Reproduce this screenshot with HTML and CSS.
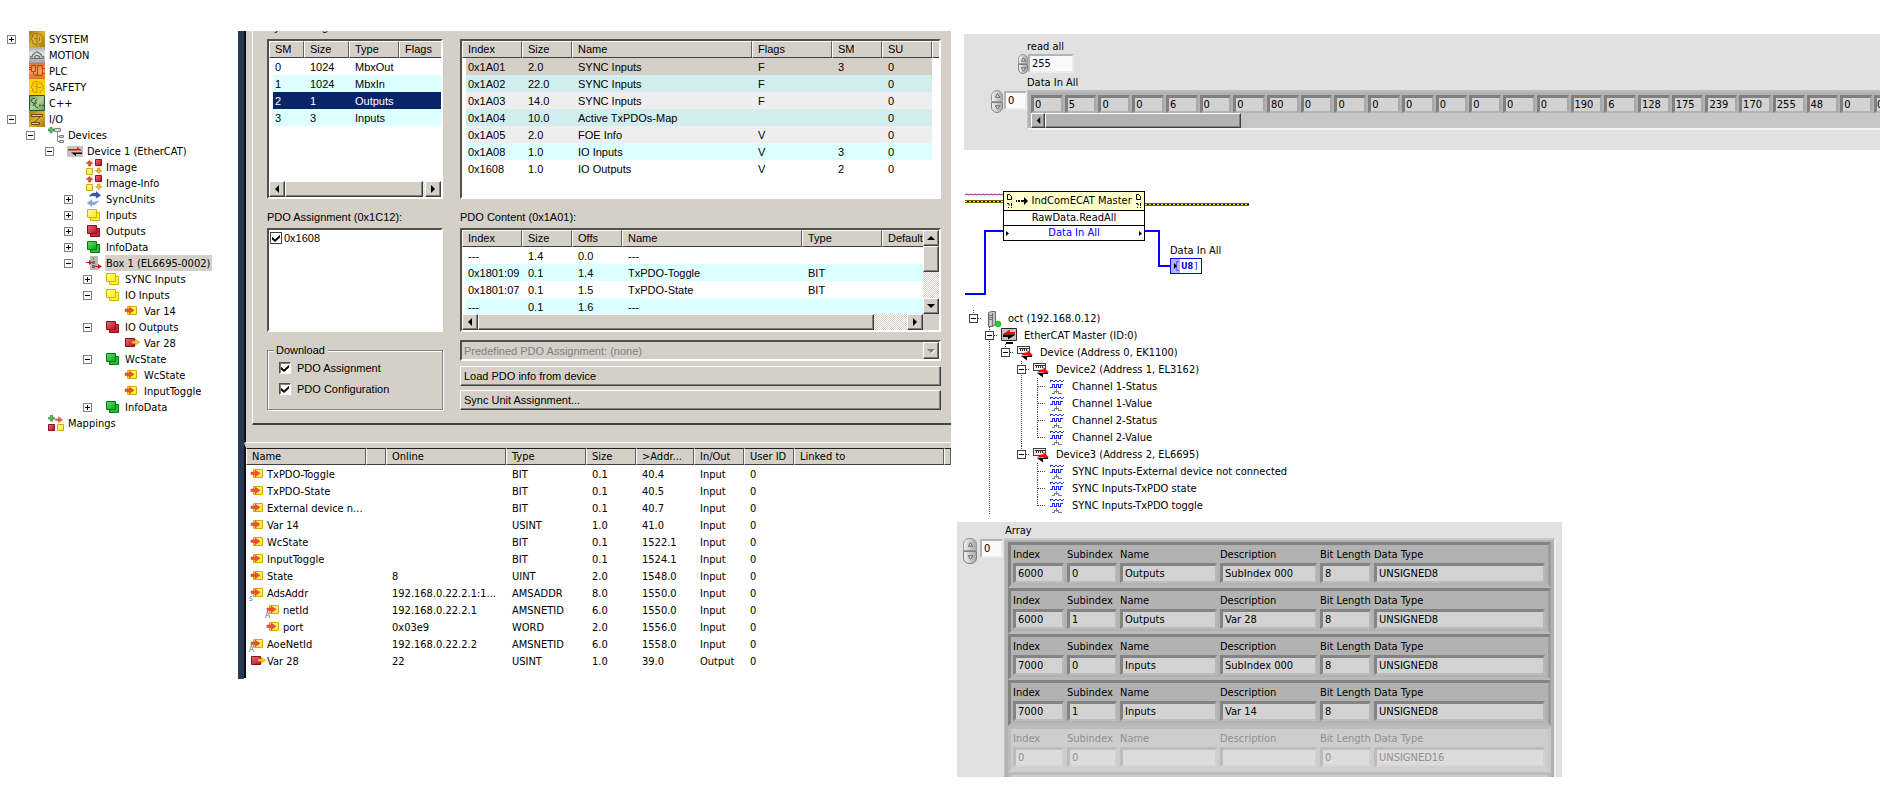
FILE: index.html
```html
<!DOCTYPE html>
<html lang="en">
  <head>
    <meta charset="UTF-8">
    <meta name="viewport" content="width=device-width, initial-scale=1.0">
    <title>EtherCAT IO Mapping</title>
    <link rel="stylesheet" href="styles.css">
  </head>
  <body>
    <!-- icon sprite -->
    <svg class="sprite" aria-hidden="true">
      <defs>
        <linearGradient id="gold" x1="0" y1="0" x2="1" y2="1"><stop offset="0" stop-color="#a87a0c"/><stop offset=".5" stop-color="#d9b23c"/><stop offset="1" stop-color="#a87a0c"/></linearGradient>
        <linearGradient id="grey" x1="0" y1="0" x2="0" y2="1"><stop offset="0" stop-color="#a8a8a8"/><stop offset=".4" stop-color="#e4e4e4"/><stop offset="1" stop-color="#a0a0a0"/></linearGradient>
        <linearGradient id="orange" x1="0" y1="0" x2="0" y2="1"><stop offset="0" stop-color="#d4722c"/><stop offset=".5" stop-color="#f2a468"/><stop offset="1" stop-color="#d4722c"/></linearGradient>
        <linearGradient id="olive" x1="0" y1="0" x2="1" y2="1"><stop offset="0" stop-color="#6d9a62"/><stop offset=".5" stop-color="#b9cf9c"/><stop offset="1" stop-color="#6d9a62"/></linearGradient>
        <linearGradient id="red" x1="0" y1="0" x2="1" y2="1"><stop offset="0" stop-color="#e8707c"/><stop offset="1" stop-color="#b80c20"/></linearGradient>
        <linearGradient id="yellow" x1="0" y1="0" x2="1" y2="1"><stop offset="0" stop-color="#ffff9c"/><stop offset="1" stop-color="#f8ec20"/></linearGradient>
        <linearGradient id="green" x1="0" y1="0" x2="1" y2="1"><stop offset="0" stop-color="#5ee06a"/><stop offset="1" stop-color="#08a818"/></linearGradient>
      </defs>
      <symbol id="i-system" viewBox="0 0 16 16"><path fill="url(#gold)" d="M0 0h16v16H0z"/><path fill="#d8ac38" stroke="#a07410" d="M6 2.500h2v11H6L3.500 12l.5-2-1.500-1.500V7L4 6l-.5-2zM9.500 2.500l1 1.500 2-.5.5 2 1 1.500-1 1.500 1 1.500-1.500 1.500-1 2-1.500-.5M5 7.500h3M10.500 6v4"/></symbol>
      <symbol id="i-motion" viewBox="0 0 16 16"><path fill="url(#grey)" d="M0 0h16v16H0z"/><path fill="none" stroke="#6a6a6a" d="M1.500 11.500h13v-2h-2v-2h-1.500v-1.500h-2v-1H7v1H5v1.500H3.500v2h-2zM5.500 11V9.500h1V8.500h3v1h1V11"/></symbol>
      <symbol id="i-plc" viewBox="0 0 16 16"><path fill="url(#orange)" d="M0 0h16v16H0z"/><path fill="none" stroke="#b0480c" d="M2.500 2.500h4v6h-4zM8.500 2.500h5v10h-5zM0 4.500h2M0 6.500h2M13.500 5.500H16M13.500 10.500H16M4.500 9v3H8"/></symbol>
      <symbol id="i-safety" viewBox="0 0 16 16"><path fill="#ffd400" d="M0 0h16v16H0z"/><path fill="none" stroke="#d09000" d="M6 2.500h2v11H6L3.500 12l.5-2-1.500-1V7L4 6l-.5-2zM9.500 2.500l1 1.500 2-.5.5 2 1.500 1.500-1 1.500 1 1.500-2 1.500-1 2-1.500-.5M5 7.500h3M9 8.500h3"/></symbol>
      <symbol id="i-cpp" viewBox="0 0 16 16"><path fill="url(#olive)" stroke="#1c5c28" d="M.5.5h15v15H.5z"/><path fill="none" stroke="#1c6430" d="M6 3.500H4L2.500 5v1.500L4 8h1M4 11l4-7M8 7.500L6 9v2l1.500 1.500H9M10 10.500h2M11 9.500v2M13 10.500h2M14 9.500v2"/></symbol>
      <symbol id="i-io" viewBox="0 0 16 16"><path fill="url(#gold)" d="M0 0h16v16H0z"/><path fill="#e8cc70" stroke="#6e4a08" d="M2.500 3.500h11v2h-11zM11.500 5.500L5 11.500M2.500 11.500h8v2h-8z"/></symbol>
      <symbol id="i-devices" viewBox="0 0 16 16"><path fill="none" stroke="#909090" d="M9.500 5v9.500H12M9.500 9.500H12"/><path fill="#d8d8d8" stroke="#808080" d="M6.500 1.500h6v3h-6zM11.500 8.500h4v2h-4zM11.500 13.500h4v2h-4z"/><path fill="#5cb860" stroke="#308038" stroke-width=".6" d="M2 0h2v2h2v2H4v2H2V4H0V2h2z"/></symbol>
      <symbol id="i-ethercat" viewBox="0 0 16 16"><path fill="#c4c4c4" d="M0 3h16v11H0z"/><path fill="#f00" d="M1 6h9V4l5 3.500H1z"/><path fill="#000" d="M15 11H9v2L4 9.500h11z"/></symbol>
      <symbol id="i-image" viewBox="0 0 16 16"><path fill="#f05030" stroke="#c03010" stroke-width=".5" d="M3.500 1.500L7 4.500H5V7H2.500V4.500H0z"/><path fill="url(#red)" stroke="#901020" d="M9.500.5h6v6h-6z"/><path fill="url(#yellow)" stroke="#d0a820" d="M.5 9.500h6v6h-6z"/><path fill="#f8b830" stroke="#d08000" stroke-width=".5" d="M11.500 9H14v2.500h2l-3.300 3L9.500 11.500h2z"/></symbol>
      <symbol id="i-sync" viewBox="0 0 16 16"><path fill="#3a54a8" d="M3 6c1-3 4-5 7-4V0l5 4.500-5 3V5.500C7 4.500 5 5 3 6z"/><path fill="#8aa4dc" d="M13 9c-1 3-3.500 5.500-7 5v2l-5-4 5-4v2.500c2.500.5 5 0 7-1.500z"/></symbol>
      <symbol id="i-inputs" viewBox="0 0 16 16"><path fill="#fff02c" stroke="#d8b000" d="M4.500 5.500h9v8h-9z"/><path fill="url(#yellow)" stroke="#d8b000" d="M1.500 2.500h9v8h-9z"/></symbol>
      <symbol id="i-outputs" viewBox="0 0 16 16"><path fill="#d02438" stroke="#900c18" d="M4.500 5.500h9v8h-9z"/><path fill="url(#red)" stroke="#900c18" d="M1.500 2.500h9v8h-9z"/></symbol>
      <symbol id="i-info" viewBox="0 0 16 16"><path fill="#20c030" stroke="#087810" d="M4.500 5.500h9v8h-9z"/><path fill="url(#green)" stroke="#087810" d="M1.500 2.500h9v8h-9z"/></symbol>
      <symbol id="i-box" viewBox="0 0 16 16"><path fill="#b8b8b8" d="M4 1h8v14H4z"/><path fill="#20d030" d="M7 2h1v3H7z"/><path fill="#707070" d="M6 6h3v3H6zM6 10h3v3H6z"/><path fill="#e80000" d="M0 7h3V5l3 2.500L3 10V8H0zM9 11h3V9l4 2.500-4 2.500v-2H9z"/></symbol>
      <symbol id="i-var-in" viewBox="0 0 16 16"><path fill="url(#yellow)" stroke="#dca800" d="M3.500 3.500h9v8h-9z"/><path fill="#f4502c" stroke="#d03818" stroke-width=".5" d="M1 6h4V4l5 3.200L5 11V8.500H1z"/></symbol>
      <symbol id="i-var-out" viewBox="0 0 16 16"><path fill="url(#red)" stroke="#900c18" d="M1.500 3.500h9v8h-9z"/><path fill="#f8c030" stroke="#c88800" stroke-width=".5" d="M8 6h3V4l4.700 3.200L11 10.500V8.500H8z"/></symbol>
      <symbol id="i-mappings" viewBox="0 0 16 16"><path fill="#5cb860" stroke="#308038" stroke-width=".6" d="M2.500 0h2v2.200h2v2h-2v2h-2v-2h-2v-2h2z"/><path fill="#f06030" stroke="#c84010" stroke-width=".5" d="M7.500 4h3V1.800l4 3-4 3V5.500h-3z"/><path fill="url(#red)" stroke="#901020" d="M.5 9.500h6v6h-6z"/><path fill="url(#yellow)" stroke="#d0a820" d="M9.500 9.500h6v6h-6z"/></symbol>
      <symbol id="i-host" viewBox="0 0 16 16"><path fill="#c8c8c8" stroke="#686868" d="M3.500 1.500l3-1h4v13l-3 2h-4z"/><path stroke="#707070" d="M4 4.500h3M4 6.500h3M4 8.500h3M7.500 2v13"/><circle cx="13" cy="13" r="3" fill="#18d828" stroke="#109018" stroke-width=".5"/></symbol>
      <symbol id="i-master" viewBox="0 0 16 16"><path fill="#c4c4c4" stroke="#282828" d="M.5.5h15v12H.5z"/><path fill="#f00" d="M2 6.500h12V4H9V1.500L2 6z"/><path fill="#000" d="M14 6.500H2V9h5v2.500L14 7zM5 14h7v2H5z"/></symbol>
      <symbol id="i-slave" viewBox="0 0 16 16"><g shape-rendering="crispEdges"><path fill="#f4f4f4" stroke="#404040" d="M.5 1.500h12v7H.5z"/><path stroke="#303030" d="M2 3.500h10M3.500 3v3M5.500 3v3M7.500 3v3M9.500 3v3"/></g><path fill="#f00" d="M4 10.500h12L10.500 5v2.500H8z"/><path fill="#000" d="M4 11h7v-.5h4V12h-5v3.500z"/></symbol>
      <symbol id="i-channel" viewBox="0 0 16 16"><g fill="none" shape-rendering="crispEdges"><path stroke="#1830f0" d="M1 2.500l2-1.500 2 2 2-2 2 2 2-2 2 2 1.500-1.500M1 8.500h2v-3h2v3h2v-3h2v3h2v-3h2.500"/><path stroke="#808080" d="M7.500 10v4M3 14.500h3M9 14.500h4M5.500 14v-1.500h2M9.500 14v-1.500h-2"/></g></symbol>
    </svg>

    <div class="page">
      <!-- solution tree -->
      <ul class="tree tahoma">
        <li><div class="node"><button class="exp plus" aria-label="expand"></button><svg><use href="#i-system"/></svg><span>SYSTEM</span></div></li>
        <li><div class="node"><i class="exp-gap"></i><svg><use href="#i-motion"/></svg><span>MOTION</span></div></li>
        <li><div class="node"><i class="exp-gap"></i><svg><use href="#i-plc"/></svg><span>PLC</span></div></li>
        <li><div class="node"><i class="exp-gap"></i><svg><use href="#i-safety"/></svg><span>SAFETY</span></div></li>
        <li><div class="node"><i class="exp-gap"></i><svg><use href="#i-cpp"/></svg><span>C++</span></div></li>
        <li><div class="node"><button class="exp" aria-label="collapse"></button><svg><use href="#i-io"/></svg><span>I/O</span></div>
          <ul>
            <li><div class="node"><button class="exp" aria-label="collapse"></button><svg><use href="#i-devices"/></svg><span>Devices</span></div>
              <ul>
                <li><div class="node"><button class="exp" aria-label="collapse"></button><svg><use href="#i-ethercat"/></svg><span>Device 1 (EtherCAT)</span></div>
                  <ul>
                    <li><div class="node"><i class="exp-gap"></i><svg><use href="#i-image"/></svg><span>Image</span></div></li>
                    <li><div class="node"><i class="exp-gap"></i><svg><use href="#i-image"/></svg><span>Image-Info</span></div></li>
                    <li><div class="node"><button class="exp plus" aria-label="expand"></button><svg><use href="#i-sync"/></svg><span>SyncUnits</span></div></li>
                    <li><div class="node"><button class="exp plus" aria-label="expand"></button><svg><use href="#i-inputs"/></svg><span>Inputs</span></div></li>
                    <li><div class="node"><button class="exp plus" aria-label="expand"></button><svg><use href="#i-outputs"/></svg><span>Outputs</span></div></li>
                    <li><div class="node"><button class="exp plus" aria-label="expand"></button><svg><use href="#i-info"/></svg><span>InfoData</span></div></li>
                    <li><div class="node"><button class="exp" aria-label="collapse"></button><svg><use href="#i-box"/></svg><span class="current">Box 1 (EL6695-0002)</span></div>
                      <ul>
                        <li><div class="node"><button class="exp plus" aria-label="expand"></button><svg><use href="#i-inputs"/></svg><span>SYNC Inputs</span></div></li>
                        <li><div class="node"><button class="exp" aria-label="collapse"></button><svg><use href="#i-inputs"/></svg><span>IO Inputs</span></div>
                          <ul>
                            <li><div class="node"><i class="exp-gap"></i><svg><use href="#i-var-in"/></svg><span>Var 14</span></div></li>
                          </ul>
                        </li>
                        <li><div class="node"><button class="exp" aria-label="collapse"></button><svg><use href="#i-outputs"/></svg><span>IO Outputs</span></div>
                          <ul>
                            <li><div class="node"><i class="exp-gap"></i><svg><use href="#i-var-out"/></svg><span>Var 28</span></div></li>
                          </ul>
                        </li>
                        <li><div class="node"><button class="exp" aria-label="collapse"></button><svg><use href="#i-info"/></svg><span>WcState</span></div>
                          <ul>
                            <li><div class="node"><i class="exp-gap"></i><svg><use href="#i-var-in"/></svg><span>WcState</span></div></li>
                            <li><div class="node"><i class="exp-gap"></i><svg><use href="#i-var-in"/></svg><span>InputToggle</span></div></li>
                          </ul>
                        </li>
                        <li><div class="node"><button class="exp plus" aria-label="expand"></button><svg><use href="#i-info"/></svg><span>InfoData</span></div></li>
                      </ul>
                    </li>
                  </ul>
                </li>
              </ul>
            </li>
            <li><div class="node"><i class="exp-gap"></i><svg><use href="#i-mappings"/></svg><span>Mappings</span></div></li>
          </ul>
        </li>
      </ul>

      <!-- TwinCAT window -->
      <main class="window">
        <section class="upper">
          <div class="pane">
            <div class="cut-caption"><span>Sync Manager:</span></div>
            <div class="pane-cols">
              <div class="pane-left">
                <div class="sunken list-tall">
                  <table class="list sm-list">
                    <thead><tr><th>SM</th><th>Size</th><th>Type</th><th>Flags</th></tr></thead>
                    <tbody>
                      <tr><td>0</td><td>1024</td><td>MbxOut</td><td></td></tr>
                      <tr class="cyan"><td>1</td><td>1024</td><td>MbxIn</td><td></td></tr>
                      <tr class="selected"><td>2</td><td>1</td><td>Outputs</td><td></td></tr>
                      <tr class="cyan"><td>3</td><td>3</td><td>Inputs</td><td></td></tr>
                    </tbody>
                  </table>
                  <div class="hscroll">
                    <button class="raised" aria-label="left"><svg viewBox="0 0 8 8"><path d="M6 0v8L2 4z"/></svg></button>
                    <div class="thumb raised sm-thumb"></div>
                    <div class="track"></div>
                    <button class="raised" aria-label="right"><svg viewBox="0 0 8 8"><path d="M2 0v8l4-4z"/></svg></button>
                  </div>
                </div>
                <p class="caption">PDO Assignment (0x1C12):</p>
                <div class="sunken list-short">
                  <label class="check flat"><input type="checkbox" checked><span>0x1608</span></label>
                </div>
                <fieldset>
                  <legend>Download</legend>
                  <label class="check"><input type="checkbox" checked><span>PDO Assignment</span></label>
                  <label class="check"><input type="checkbox" checked><span>PDO Configuration</span></label>
                </fieldset>
              </div>

              <div class="pane-right">
                <div class="sunken list-tall">
                  <table class="list pdo-list">
                    <thead><tr><th>Index</th><th>Size</th><th>Name</th><th>Flags</th><th>SM</th><th>SU</th><th></th></tr></thead>
                    <tbody>
                      <tr class="active"><td>0x1A01</td><td>2.0</td><td>SYNC Inputs</td><td>F</td><td>3</td><td>0</td><td></td></tr>
                      <tr class="teal"><td>0x1A02</td><td>22.0</td><td>SYNC Inputs</td><td>F</td><td></td><td>0</td><td></td></tr>
                      <tr class="grey"><td>0x1A03</td><td>14.0</td><td>SYNC Inputs</td><td>F</td><td></td><td>0</td><td></td></tr>
                      <tr class="teal"><td>0x1A04</td><td>10.0</td><td>Active TxPDOs-Map</td><td></td><td></td><td>0</td><td></td></tr>
                      <tr class="grey"><td>0x1A05</td><td>2.0</td><td>FOE Info</td><td>V</td><td></td><td>0</td><td></td></tr>
                      <tr class="cyan"><td>0x1A08</td><td>1.0</td><td>IO Inputs</td><td>V</td><td>3</td><td>0</td><td></td></tr>
                      <tr><td>0x1608</td><td>1.0</td><td>IO Outputs</td><td>V</td><td>2</td><td>0</td><td></td></tr>
                    </tbody>
                  </table>
                </div>
                <p class="caption">PDO Content (0x1A01):</p>
                <div class="sunken list-short content-list">
                  <div class="content-view">
                    <table class="list content-table">
                      <thead><tr><th>Index</th><th>Size</th><th>Offs</th><th>Name</th><th>Type</th><th>Default</th></tr></thead>
                      <tbody>
                        <tr><td>---</td><td>1.4</td><td>0.0</td><td>---</td><td></td><td></td></tr>
                        <tr class="cyan"><td>0x1801:09</td><td>0.1</td><td>1.4</td><td>TxPDO-Toggle</td><td>BIT</td><td></td></tr>
                        <tr><td>0x1801:07</td><td>0.1</td><td>1.5</td><td>TxPDO-State</td><td>BIT</td><td></td></tr>
                        <tr class="cyan"><td>---</td><td>0.1</td><td>1.6</td><td>---</td><td></td><td></td></tr>
                      </tbody>
                    </table>
                  </div>
                  <div class="vscroll">
                    <button class="raised" aria-label="up"><svg viewBox="0 0 8 8"><path d="M0 6h8L4 2z"/></svg></button>
                    <div class="thumb raised"></div>
                    <div class="track"></div>
                    <button class="raised" aria-label="down"><svg viewBox="0 0 8 8"><path d="M0 2h8L4 6z"/></svg></button>
                  </div>
                  <div class="hscroll">
                    <button class="raised" aria-label="left"><svg viewBox="0 0 8 8"><path d="M6 0v8L2 4z"/></svg></button>
                    <div class="thumb raised content-thumb"></div>
                    <div class="track"></div>
                    <button class="raised" aria-label="right"><svg viewBox="0 0 8 8"><path d="M2 0v8l4-4z"/></svg></button>
                  </div>
                </div>
                <div class="combo sunken">
                  <select disabled aria-label="Predefined PDO Assignment"><option>Predefined PDO Assignment: (none)</option></select>
                  <span class="raised drop"><svg viewBox="0 0 8 8"><path fill="#fff" d="M1 3h8L5 7z"/><path fill="#808080" d="M0 2h8L4 6z"/></svg></span>
                </div>
                <button class="wide raised">Load PDO info from device</button>
                <button class="wide raised">Sync Unit Assignment...</button>
              </div>
            </div>
          </div>
        </section>

        <table class="list vars tahoma">
          <thead>
            <tr><th>Name</th><th></th><th>Online</th><th>Type</th><th>Size</th><th>&gt;Addr...</th><th>In/Out</th><th>User ID</th><th>Linked to</th><th></th></tr>
          </thead>
          <tbody>
            <tr><td colspan="2"><div class="var"><svg><use href="#i-var-in"/></svg>TxPDO-Toggle</div></td><td></td><td>BIT</td><td>0.1</td><td>40.4</td><td>Input</td><td>0</td><td></td><td></td></tr>
            <tr><td colspan="2"><div class="var"><svg><use href="#i-var-in"/></svg>TxPDO-State</div></td><td></td><td>BIT</td><td>0.1</td><td>40.5</td><td>Input</td><td>0</td><td></td><td></td></tr>
            <tr><td colspan="2"><div class="var"><svg><use href="#i-var-in"/></svg>External device n...</div></td><td></td><td>BIT</td><td>0.1</td><td>40.7</td><td>Input</td><td>0</td><td></td><td></td></tr>
            <tr><td colspan="2"><div class="var"><svg><use href="#i-var-in"/></svg>Var 14</div></td><td></td><td>USINT</td><td>1.0</td><td>41.0</td><td>Input</td><td>0</td><td></td><td></td></tr>
            <tr><td colspan="2"><div class="var"><svg><use href="#i-var-in"/></svg>WcState</div></td><td></td><td>BIT</td><td>0.1</td><td>1522.1</td><td>Input</td><td>0</td><td></td><td></td></tr>
            <tr><td colspan="2"><div class="var"><svg><use href="#i-var-in"/></svg>InputToggle</div></td><td></td><td>BIT</td><td>0.1</td><td>1524.1</td><td>Input</td><td>0</td><td></td><td></td></tr>
            <tr><td colspan="2"><div class="var"><svg><use href="#i-var-in"/></svg>State</div></td><td>8</td><td>UINT</td><td>2.0</td><td>1548.0</td><td>Input</td><td>0</td><td></td><td></td></tr>
            <tr><td colspan="2"><div class="var"><svg><use href="#i-var-in"/></svg><small>s</small>AdsAddr</div></td><td>192.168.0.22.2.1:1...</td><td>AMSADDR</td><td>8.0</td><td>1550.0</td><td>Input</td><td>0</td><td></td><td></td></tr>
            <tr><td colspan="2"><div class="var child"><svg><use href="#i-var-in"/></svg><small>A</small>netId</div></td><td>192.168.0.22.2.1</td><td>AMSNETID</td><td>6.0</td><td>1550.0</td><td>Input</td><td>0</td><td></td><td></td></tr>
            <tr><td colspan="2"><div class="var child"><svg><use href="#i-var-in"/></svg>port</div></td><td>0x03e9</td><td>WORD</td><td>2.0</td><td>1556.0</td><td>Input</td><td>0</td><td></td><td></td></tr>
            <tr><td colspan="2"><div class="var"><svg><use href="#i-var-in"/></svg><small>A</small>AoeNetId</div></td><td>192.168.0.22.2.2</td><td>AMSNETID</td><td>6.0</td><td>1558.0</td><td>Input</td><td>0</td><td></td><td></td></tr>
            <tr><td colspan="2"><div class="var"><svg><use href="#i-var-out"/></svg>Var 28</div></td><td>22</td><td>USINT</td><td>1.0</td><td>39.0</td><td>Output</td><td>0</td><td></td><td></td></tr>
          </tbody>
        </table>
      </main>

      <!-- LabVIEW side -->
      <div class="labview tahoma">
        <section class="front-panel">
          <div class="read-all">
            <label for="read-all">read all</label>
            <div class="numeric">
              <div class="spin"><button aria-label="up"><svg viewBox="0 0 8 8"><path d="M4 2l2.500 4h-5z"/></svg></button><button aria-label="down"><svg viewBox="0 0 8 8"><path d="M4 6l2.500-4h-5z"/></svg></button></div>
              <input class="control" id="read-all" type="text" value="255">
            </div>
          </div>
          <div class="data-in">
            <label for="data-index">Data In All</label>
            <div class="numeric">
              <div class="spin big"><button aria-label="up"><svg viewBox="0 0 8 8"><path d="M4 2l2.500 4h-5z"/></svg></button><button aria-label="down"><svg viewBox="0 0 8 8"><path d="M4 6l2.500-4h-5z"/></svg></button></div>
              <input class="control index" id="data-index" type="text" value="0">
              <div class="array">
                <div class="cells">
                  <output>0</output><output>5</output><output>0</output><output>0</output><output>6</output>
                  <output>0</output><output>0</output><output>80</output><output>0</output><output>0</output>
                  <output>0</output><output>0</output><output>0</output><output>0</output><output>0</output>
                  <output>0</output><output>190</output><output>6</output><output>128</output><output>175</output>
                  <output>239</output><output>170</output><output>255</output><output>48</output><output>0</output>
                  <output>0</output>
                </div>
                <div class="array-scroll">
                  <button class="raised" aria-label="left"><svg viewBox="0 0 8 8"><path d="M6 0v8L2 4z"/></svg></button>
                  <div class="thumb raised"></div>
                </div>
              </div>
            </div>
          </div>
        </section>

        <section class="diagram">
          <svg class="wires" width="290" height="160" viewBox="0 0 290 160" fill="none">
            <path stroke="#901890" d="M1 45l2-1 2 1 2-1 2 1 2-1 2 1 2-1 2 1 2-1 2 1 2-1 2 1 2-1 2 1 2-1 2 1 2-1 2 1 2-1"/>
            <path stroke="#706c00" stroke-width="3" d="M1 51.500h38M181 54.500h104"/>
            <path stroke="#000" stroke-width="1" d="M1 51.500h38M181 54.500h104"/>
            <path stroke="#fff200" stroke-width="1" stroke-dasharray="2 2" d="M1 51.500h38M181 54.500h104"/>
            <path stroke="#00f" stroke-width="2" d="M1 144h20V81h18M181 81h14v35h12"/>
          </svg>
          <div class="invoke">
            <div class="invoke-head">
              <svg class="ref" viewBox="0 0 7 16"><path fill="none" stroke="#000" d="M1.500 1.500h2l2 2v3h-4zM1 10.500h2v2M2.500 14v1M5.500 10v3M5.500 14v1"/></svg>
              <svg class="arrow" viewBox="0 0 12 8"><path d="M0 3h1v2H0zM2 3h2v2H2zM5 3h3V0l4 4-4 4V5H5z"/></svg>
              <span>IndComECAT Master</span>
              <svg class="ref" viewBox="0 0 7 16"><path fill="none" stroke="#000" d="M1.500 1.500h2l2 2v3h-4zM1 10.500h2v2M2.500 14v1M5.500 10v3M5.500 14v1"/></svg>
            </div>
            <div class="invoke-row">RawData.ReadAll</div>
            <div class="invoke-row port"><svg viewBox="0 0 3 5"><path d="M0 0v5l3-2.500z"/></svg><span>Data In All</span><svg viewBox="0 0 3 5"><path d="M0 0v5l3-2.500z"/></svg></div>
          </div>
          <div class="terminal">
            <span>Data In All</span>
            <div class="terminal-box"><svg viewBox="0 0 9 14"><path fill="#b4b0ff" d="M0 0h9v14H0z"/><path fill="none" stroke="#5060ff" d="M8 2.500H5.500v9H8"/><path d="M3 4l3 3-3 3z"/></svg><b>U8</b><em>]</em></div>
          </div>
        </section>

        <ul class="project">
          <li class="root"><div class="node"><button class="exp" aria-label="collapse"></button><svg><use href="#i-host"/></svg><span>oct (192.168.0.12)</span></div>
            <ul>
              <li class="more"><div class="node"><button class="exp" aria-label="collapse"></button><svg><use href="#i-master"/></svg><span>EtherCAT Master (ID:0)</span></div>
                <ul>
                  <li><div class="node"><button class="exp" aria-label="collapse"></button><svg><use href="#i-slave"/></svg><span>Device (Address 0, EK1100)</span></div>
                    <ul>
                      <li><div class="node"><button class="exp" aria-label="collapse"></button><svg><use href="#i-slave"/></svg><span>Device2 (Address 1, EL3162)</span></div>
                        <ul>
                          <li><div class="node"><i class="exp-gap"></i><svg><use href="#i-channel"/></svg><span>Channel 1-Status</span></div></li>
                          <li><div class="node"><i class="exp-gap"></i><svg><use href="#i-channel"/></svg><span>Channel 1-Value</span></div></li>
                          <li><div class="node"><i class="exp-gap"></i><svg><use href="#i-channel"/></svg><span>Channel 2-Status</span></div></li>
                          <li><div class="node"><i class="exp-gap"></i><svg><use href="#i-channel"/></svg><span>Channel 2-Value</span></div></li>
                        </ul>
                      </li>
                      <li><div class="node"><button class="exp" aria-label="collapse"></button><svg><use href="#i-slave"/></svg><span>Device3 (Address 2, EL6695)</span></div>
                        <ul>
                          <li><div class="node"><i class="exp-gap"></i><svg><use href="#i-channel"/></svg><span>SYNC Inputs-External device not connected</span></div></li>
                          <li><div class="node"><i class="exp-gap"></i><svg><use href="#i-channel"/></svg><span>SYNC Inputs-TxPDO state</span></div></li>
                          <li><div class="node"><i class="exp-gap"></i><svg><use href="#i-channel"/></svg><span>SYNC Inputs-TxPDO toggle</span></div></li>
                        </ul>
                      </li>
                    </ul>
                  </li>
                </ul>
              </li>
            </ul>
          </li>
        </ul>

        <section class="cluster-panel">
          <label class="array-name" for="cluster-index">Array</label>
          <div class="numeric">
            <div class="spin tall"><button aria-label="up"><svg viewBox="0 0 8 8"><path d="M4 2l2.500 4h-5z"/></svg></button><button aria-label="down"><svg viewBox="0 0 8 8"><path d="M4 6l2.500-4h-5z"/></svg></button></div>
            <input class="control index" id="cluster-index" type="text" value="0">
            <div class="clusters">
              <div class="cluster">
                <label>Index<input readonly value="6000"></label><label>Subindex<input readonly value="0"></label><label>Name<input readonly value="Outputs"></label><label>Description<input readonly value="SubIndex 000"></label><label>Bit Length<input readonly value="8"></label><label>Data Type<input readonly value="UNSIGNED8"></label>
              </div>
              <div class="cluster">
                <label>Index<input readonly value="6000"></label><label>Subindex<input readonly value="1"></label><label>Name<input readonly value="Outputs"></label><label>Description<input readonly value="Var 28"></label><label>Bit Length<input readonly value="8"></label><label>Data Type<input readonly value="UNSIGNED8"></label>
              </div>
              <div class="cluster">
                <label>Index<input readonly value="7000"></label><label>Subindex<input readonly value="0"></label><label>Name<input readonly value="Inputs"></label><label>Description<input readonly value="SubIndex 000"></label><label>Bit Length<input readonly value="8"></label><label>Data Type<input readonly value="UNSIGNED8"></label>
              </div>
              <div class="cluster">
                <label>Index<input readonly value="7000"></label><label>Subindex<input readonly value="1"></label><label>Name<input readonly value="Inputs"></label><label>Description<input readonly value="Var 14"></label><label>Bit Length<input readonly value="8"></label><label>Data Type<input readonly value="UNSIGNED8"></label>
              </div>
              <div class="cluster dim">
                <label>Index<input readonly value="0"></label><label>Subindex<input readonly value="0"></label><label>Name<input readonly value=""></label><label>Description<input readonly value=""></label><label>Bit Length<input readonly value="0"></label><label>Data Type<input readonly value="UNSIGNED16"></label>
              </div>
              <div class="cluster-next"></div>
            </div>
          </div>
        </section>
      </div>
    </div>
  </body>
</html>
```

FILE: styles.css
```css
* {
  box-sizing: border-box;
}

body {
  margin: 0;
  background: #fff;
  color: #000;
  font-family: "Liberation Sans", Arial, sans-serif;
  font-size: 11px;
  line-height: 16px;
}

ul {
  list-style: none;
  margin: 0;
  padding: 0;
}

button, input, select, output {
  font: inherit;
  color: inherit;
  margin: 0;
  padding: 0;
  border-radius: 0;
}

.sprite {
  position: absolute;
  width: 0;
  height: 0;
}

.tahoma {
  font-family: "DejaVu Sans Condensed", Tahoma, sans-serif;
}

.page {
  display: grid;
  grid-template-columns: 238px minmax(0, 713fr) minmax(0, 929fr);
  padding-right: 6px;
  align-items: start;
}

/* trees */
.tree {
  padding: 31px 0 0 7px;
}

.tree ul {
  padding-left: 19px;
}

.node {
  display: flex;
  align-items: center;
  height: 16px;
  white-space: nowrap;
}

.node svg {
  flex: none;
  width: 16px;
  height: 16px;
}

.tree .node svg {
  margin: 0 3px 0 13px;
}

.tree .node span {
  padding: 1px 2px 0 1px;
  line-height: 15px;
}

.tree .node .current {
  background: #d4d0c8;
}

.exp, .exp-gap {
  flex: none;
  width: 9px;
  height: 9px;
}

.exp {
  border: 1px solid #808080;
  background: linear-gradient(#000, #000) center / 5px 1px no-repeat #fff;
}

.exp.plus {
  background: linear-gradient(#000, #000) center / 5px 1px no-repeat, linear-gradient(#000, #000) center / 1px 5px no-repeat #fff;
}

/* window */
.window {
  margin-top: 31px;
  border-left: 6px solid #293955;
  min-height: 648px;
  background: #fff;
}

.upper {
  background: #d4d0c8;
  border-left: 2px solid #101010;
  padding: 0 0 17px 6px;
  border-bottom: 1px solid #fff;
}

.pane {
  border-left: 1px solid #fff;
  border-bottom: 2px solid #404040;
  padding: 0 10px 13px 14px;
}

.cut-caption {
  display: flex;
  align-items: flex-end;
  height: 2px;
  margin-bottom: 6px;
  overflow: hidden;
  line-height: 11px;
}

.pane-cols {
  display: flex;
  gap: 17px;
}

.pane-left {
  flex: none;
  width: 176px;
}

.pane-right {
  flex: 1;
  min-width: 0;
}

.sunken {
  border: 2px solid;
  border-color: #505050 #fff #fff #505050;
  background: #fff;
}

.raised {
  background: #d4d0c8;
  border: 1px solid;
  border-color: #fff #404040 #404040 #fff;
  box-shadow: inset -1px -1px #808080;
}

.list-tall, .list-short {
  display: flex;
  flex-direction: column;
  height: 160px;
}

.list-short {
  height: 104px;
}

.caption {
  margin: 11px 0 4px;
  line-height: 14px;
}

.list {
  width: 100%;
  table-layout: fixed;
  border-collapse: separate;
  border-spacing: 0;
}

.list th {
  height: 17px;
  padding: 0 0 0 5px;
  background: #d4d0c8;
  border: 1px solid;
  border-color: #fff #606060 #404040 #fff;
  font-weight: normal;
  text-align: left;
  line-height: 15px;
  white-space: nowrap;
  overflow: hidden;
}

.list td {
  height: 17px;
  padding: 2px 0 0 6px;
  line-height: 15px;
  white-space: nowrap;
}

.sm-list td:first-child, .pdo-list td:first-child, .content-table td:first-child {
  border-left: 4px solid #fff;
  padding-left: 2px;
}

.cyan td { background: #dcffff; }
.teal td { background: #d2eded; }
.grey td { background: #eee; }
.active td { background: #d4d0c8; }
.selected td { background: #0a246a; color: #fff; }
.pdo-list td:last-child { background: #fff; }

.sm-list th:nth-child(1) { width: 35px; }
.sm-list th:nth-child(2) { width: 45px; }
.sm-list th:nth-child(3) { width: 50px; }
.sm-list th:last-child { border-right: 0; }

.pdo-list th:nth-child(1), .content-table th:nth-child(1) { width: 60px; }
.pdo-list th:nth-child(2), .content-table th:nth-child(2), .content-table th:nth-child(3) { width: 50px; }
.pdo-list th:nth-child(4), .content-table th:nth-child(5) { width: 80px; }
.pdo-list th:nth-child(5), .pdo-list th:nth-child(6) { width: 50px; }
.pdo-list th:nth-child(7) { width: 7px; padding: 0; border-right: 0; }
.content-table th:nth-child(6) { width: 41px; border-right: 0; }

/* scroll bars */
.hscroll, .vscroll {
  display: flex;
  background: #d4d0c8;
}

.list-tall .hscroll {
  margin-top: auto;
}

.vscroll {
  flex-direction: column;
}

.hscroll button, .vscroll button {
  flex: none;
  display: flex;
  align-items: center;
  justify-content: center;
  width: 16px;
  height: 16px;
}

.hscroll button svg, .vscroll button svg, .drop svg {
  width: 8px;
  height: 8px;
}

.track {
  flex: 1;
  background: repeating-conic-gradient(#fff 0 25%, #d4d0c8 0 50%) 0 0 / 2px 2px;
}

.sm-thumb {
  flex: 0 1 138px;
}

.content-thumb {
  flex: 0 1 396px;
}

.vscroll .thumb {
  height: 26px;
}

.content-list {
  display: grid;
  grid-template: 84px 16px / minmax(0, 1fr) 16px;
  background: #d4d0c8;
}

.content-view {
  overflow: hidden;
  background: #fff;
}

/* check boxes */
.check {
  display: flex;
  align-items: center;
  gap: 6px;
  height: 16px;
}

.check input {
  appearance: none;
  width: 12px;
  height: 12px;
  background: #fff;
  border: 1px solid;
  border-color: #505050 #fff #fff #505050;
  box-shadow: inset 1px 1px #808080;
}

.check input:checked::before {
  content: "";
  display: block;
  width: 8px;
  height: 8px;
  margin: 1px;
  background: #000;
  clip-path: polygon(0 35%, 38% 70%, 100% 8%, 100% 45%, 38% 100%, 0 68%);
}

.check.flat {
  gap: 2px;
  padding-left: 1px;
}

.check.flat input {
  border-color: #404040;
  box-shadow: none;
}

fieldset {
  margin: 10px 0 0;
  padding: 2px 11px 12px;
  border: 1px solid #808080;
  box-shadow: 1px 1px #fff, inset 1px 1px #fff;
}

legend {
  margin-left: -5px;
  padding: 0 3px 0 2px;
  background: #d4d0c8;
}

fieldset .check + .check {
  margin-top: 5px;
}

.combo {
  display: flex;
  height: 21px;
  margin-top: 8px;
  background: #d4d0c8;
}

.combo select {
  appearance: none;
  flex: 1;
  padding-left: 2px;
  border: 0;
  background: none;
  color: #808080;
  opacity: 1;
}

.drop {
  display: flex;
  align-items: center;
  justify-content: center;
  width: 16px;
}

.wide {
  display: block;
  width: 100%;
  height: 20px;
  margin-top: 5px;
  padding-left: 3px;
  text-align: left;
}

.wide + .wide {
  margin-top: 4px;
}

/* variable table */
.vars {
  border-top: 5px solid #d4d0c8;
  border-left: 2px solid #101010;
  padding-bottom: 9px;
}

.vars th {
  border-top-color: #202020;
}

.vars td:first-child {
  padding-left: 4px;
}

.vars th:nth-child(1) { width: 120px; }
.vars th:nth-child(2) { width: 20px; }
.vars th:nth-child(3) { width: 120px; }
.vars th:nth-child(4) { width: 80px; }
.vars th:nth-child(5) { width: 50px; }
.vars th:nth-child(6) { width: 58px; }
.vars th:nth-child(7), .vars th:nth-child(8) { width: 50px; }
.vars th:nth-child(10) { width: 7px; padding: 0; }

.var {
  position: relative;
  display: flex;
  align-items: flex-end;
  gap: 1px;
  height: 15px;
}

.var svg {
  width: 16px;
  height: 16px;
}

.var.child {
  padding-left: 16px;
}

.var small {
  position: absolute;
  left: -1px;
  bottom: -2px;
  font-size: 8px;
  line-height: 8px;
  color: #707070;
}

.var.child small {
  left: 15px;
}

/* front panel */
.labview {
  padding: 34px 0 0 6px;
}

.front-panel {
  margin-left: 7px;
  padding: 6px 0 20px;
  background: #e1e1e1;
}

.front-panel label {
  display: block;
  line-height: 14px;
}

.read-all {
  padding-left: 54px;
}

.read-all label {
  padding-left: 9px;
}

.data-in {
  padding: 2px 0 0 27px;
}

.data-in label {
  padding-left: 36px;
}

.numeric {
  display: flex;
  align-items: flex-start;
}

.spin {
  flex: none;
  display: flex;
  flex-direction: column;
  width: 10px;
  height: 20px;
}

.spin button {
  flex: 1;
  display: flex;
  align-items: center;
  justify-content: center;
  min-height: 0;
  border: 1px solid #989898;
  border-radius: 6px 6px 0 0;
  background: linear-gradient(90deg, #f0f0f0, #a8a8a8);
}

.spin button + button {
  border-color: #808080;
  border-radius: 0 0 6px 6px;
}

.spin svg {
  flex: none;
  width: 7px;
  height: 7px;
  fill: #ddd;
  stroke: #585858;
}

.spin.big {
  width: 12px;
  height: 23px;
}

.spin.tall {
  width: 14px;
  height: 26px;
  margin: 0 2px 0 6px;
}

.control {
  width: 46px;
  height: 19px;
  padding-left: 2px;
  border: 2px solid;
  border-color: #b4b4b4 #ececec #ececec #b4b4b4;
  background: #fafafa;
}

.control.index {
  flex: none;
  width: 23px;
  margin: 1px 0 0 1px;
}

.array {
  flex: 1;
  min-width: 0;
  padding: 3px 0 0 3px;
  border-top: 2px solid #bcbcbc;
  border-left: 1px solid #c4c4c4;
  border-bottom: 2px solid #f4f4f4;
  background: #b2b2b2;
}

.cells {
  display: grid;
  grid-template-columns: repeat(25, minmax(0, 1fr)) 6px;
  overflow: hidden;
}

.cells output {
  height: 18px;
  padding-left: 1px;
  border: 3px solid;
  border-width: 3px 2px 2px 3px;
  border-color: #808080 #a8a8a8 #b4b4b4 #808080;
  background: #d2d2d2;
  line-height: 14px;
  margin-right: 2px;
  overflow: hidden;
}

.cells output:last-child {
  margin-right: 0;
  padding-left: 0;
  border-right: 0;
}

.array-scroll {
  display: flex;
  height: 15px;
  background: #c6c6c6;
}

.array-scroll button {
  width: 14px;
  line-height: 8px;
  background: #b4b4b4;
}

.array-scroll svg {
  width: 7px;
  height: 7px;
}

.array-scroll .thumb {
  width: 196px;
  background: #b2b2b2;
}

/* block diagram */
.diagram {
  position: relative;
  height: 160px;
  margin-left: 7px;
}

.wires {
  display: block;
}

.invoke {
  position: absolute;
  left: 39px;
  top: 41px;
  width: 142px;
  border: 1px solid #000;
  background: #fff;
}

.invoke-head {
  display: flex;
  align-items: center;
  justify-content: space-between;
  height: 18px;
  padding: 0 2px;
  background: #ffffcc;
  white-space: nowrap;
}

.ref {
  width: 7px;
  height: 16px;
}

.arrow {
  width: 12px;
  height: 8px;
}

.invoke-row {
  height: 15px;
  border-top: 1px solid #000;
  line-height: 14px;
  text-align: center;
}

.invoke-row.port {
  display: flex;
  align-items: center;
  justify-content: space-between;
  padding: 0 2px;
  color: #00f;
}

.port svg {
  width: 3px;
  height: 5px;
}

.terminal {
  position: absolute;
  left: 206px;
  top: 94px;
  line-height: 14px;
  white-space: nowrap;
}

.terminal-box {
  display: flex;
  align-items: center;
  width: 32px;
  height: 16px;
  border: 1px solid #00f;
  background: #fff;
  color: #00d;
  font-size: 9px;
}

.terminal-box svg {
  width: 9px;
  height: 14px;
}

.terminal-box b {
  margin: 0 1px;
}

.terminal-box em {
  font-style: normal;
}

/* project tree */
.project {
  padding-left: 12px;
}

.project ul {
  padding-left: 16px;
}

.project li {
  position: relative;
}

.project .node {
  height: 17px;
}

.project .node svg {
  position: relative;
  margin: 0 7px;
}

.project .exp, .project .exp-gap {
  position: relative;
  border-color: #404040;
}

/* dotted connector lines */
.project li::before {
  content: "";
  position: absolute;
  left: 4px;
  top: 0;
  bottom: 0;
  border-left: 1px dotted #404040;
}

.project li:last-child::before {
  bottom: auto;
  height: 9px;
}

.project li.more::before {
  height: auto;
  bottom: 0;
}

.project .node::before {
  content: "";
  position: absolute;
  left: 4px;
  width: 8px;
  border-top: 1px dotted #404040;
}

/* cluster array */
.cluster-panel {
  max-width: 605px;
  margin-top: 8px;
  background: #e1e1e1;
}

.array-name {
  display: block;
  padding: 2px 0 0 48px;
  line-height: 14px;
}

.clusters {
  flex: 1;
  min-width: 0;
  margin: 0 6px 0 1px;
  padding: 2px 3px 0;
  border-top: 2px solid #c8c8c8;
  border-left: 1px solid #bcbcbc;
  border-right: 2px solid #f0f0f0;
  background: #b2b2b2;
}

.cluster {
  display: grid;
  grid-template-columns: 51px 50px 97px 97px 51px minmax(0, 1fr);
  gap: 3px;
  height: 46px;
  padding: 2px 3px 0 2px;
  border: 3px solid;
  border-color: #828282 #9c9c9c #b8b8b8 #828282;
  background: #b2b2b2;
}

.cluster label {
  line-height: 16px;
  white-space: nowrap;
}

.cluster input {
  display: block;
  width: 100%;
  height: 20px;
  padding-left: 2px;
  border: 3px solid;
  border-width: 3px 2px 2px 3px;
  border-color: #848484 #b8b8b8 #bcbcbc #848484;
  background: #d2d2d2;
}

.cluster.dim {
  border-color: #bcbcbc #c8c8c8 #d0d0d0 #bcbcbc;
  background: #cdcdcd;
  color: #909090;
}

.cluster.dim input {
  border-color: #bcbcbc #d0d0d0 #d4d4d4 #bcbcbc;
  background: #dcdcdc;
}

.cluster-next {
  height: 5px;
  border: 3px solid #bcbcbc;
  border-bottom: 0;
  background: #cdcdcd;
}
```
